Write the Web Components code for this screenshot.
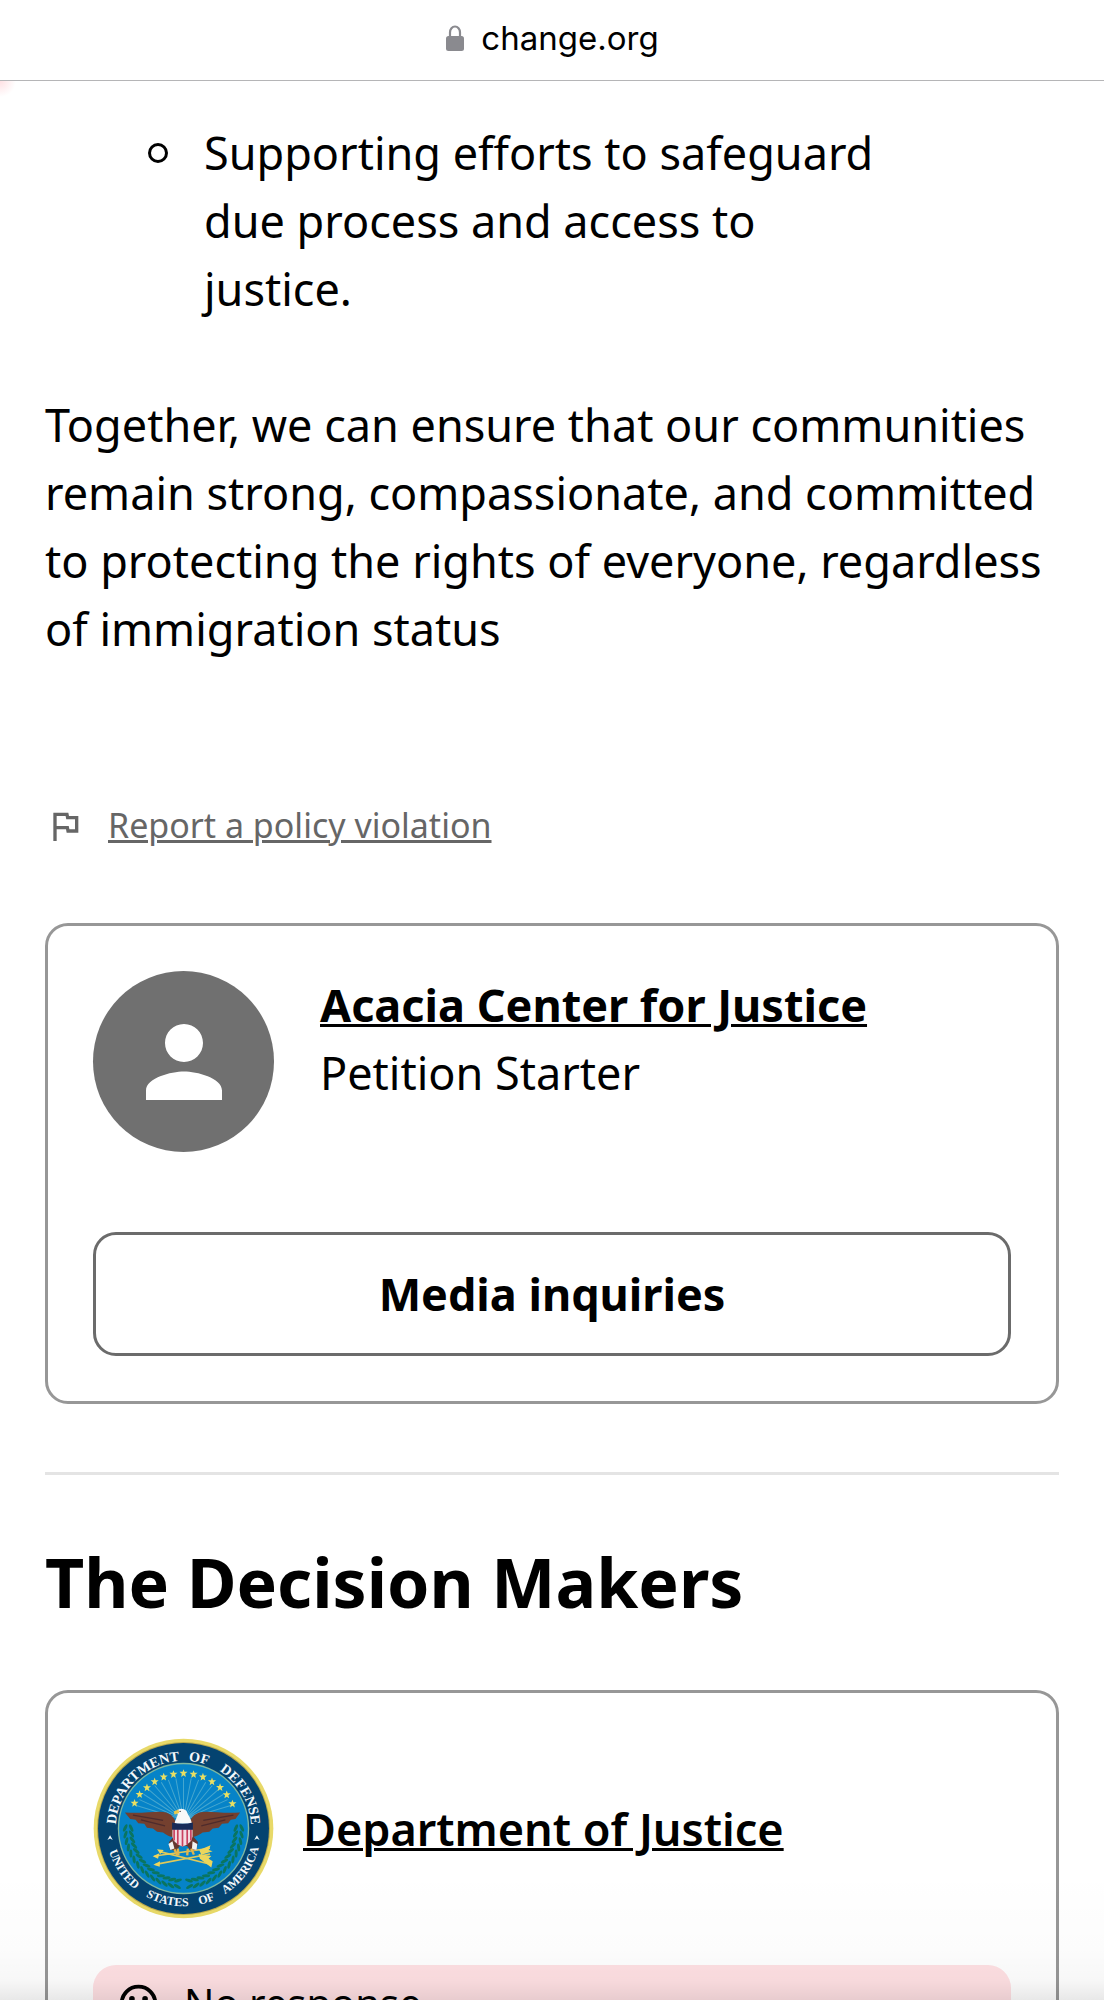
<!DOCTYPE html>
<html lang="en">
<head>
<meta charset="utf-8">
<meta name="viewport" content="width=device-width, initial-scale=1">
<title>change.org</title>
<style>
    body {
        margin: 0;
        background: #fff;
        color: #000;
        font-family: "Noto Sans", "Open Sans", sans-serif;
        font-size: 45px;
        line-height: 68px;
    }
</style>
</head>
<body>
<browser-view data-host="change.org">
    <petition-body>
        <span slot="item">Supporting efforts to safeguard due process and access to justice.</span>
        Together, we can ensure that our communities remain strong, compassionate, and committed to protecting the rights of everyone, regardless of immigration status
    </petition-body>
    <report-link>Report a policy violation</report-link>
    <outline-card>
        <profile-row data-name="Acacia Center for Justice" data-role="Petition Starter">
            <person-avatar></person-avatar>
        </profile-row>
        <outline-button>Media inquiries</outline-button>
    </outline-card>
    <section-title>The Decision Makers</section-title>
    <outline-card>
        <profile-row class="compact" data-name="Department of Justice">
            <department-seal></department-seal>
        </profile-row>
        <response-status>No response</response-status>
    </outline-card>
</browser-view>

<script>
// Shared base: puts the element's markup in an open shadow root
class BaseElement extends HTMLElement {
    constructor() {
        super();
        this.attachShadow({ mode: 'open' });
    }

    connectedCallback() {
        this.shadowRoot.innerHTML = this.template();
    }
}

class BrowserView extends BaseElement {
    template() {
        return `
            <style>
                :host {
                    display: flex;
                    flex-direction: column;
                    height: 100vh;
                    overflow: hidden;
                    position: relative;
                }
                header {
                    flex: none;
                    display: flex;
                    align-items: center;
                    justify-content: center;
                    gap: 16px;
                    height: 81px;
                    box-sizing: border-box;
                    padding-bottom: 4px;
                    border-bottom: 1px solid #b5b5b7;
                    font-family: Inter, sans-serif;
                    font-size: 33px;
                    line-height: 40px;
                }
                header svg { display: block; width: 20px; height: 28px; }
                main {
                    flex: 1;
                    min-height: 0;
                    overflow: hidden;
                    padding: 38px 45px 0;
                    background: radial-gradient(circle at 0 0, #ffe0e3 0, #fff 16px);
                }
                .shade {
                    position: absolute;
                    left: 0;
                    right: 0;
                    bottom: 0;
                    height: 130px;
                    pointer-events: none;
                    background: linear-gradient(rgba(0,0,0,0), rgba(0,0,0,.01) 60%, rgba(0,0,0,.03) 85%, rgba(0,0,0,.09));
                }
            </style>
            <header>
                <svg viewBox="0 0 20 28" aria-hidden="true">
                    <path d="M5 13V8.500a5 6 0 0 1 10 0V13" fill="none" stroke="#8a8a8f" stroke-width="2.200"/>
                    <rect x="1" y="12" width="18" height="15" rx="2.500" fill="#8a8a8f"/>
                </svg>
                <span>${this.dataset.host}</span>
            </header>
            <main><slot></slot></main>
            <div class="shade"></div>
        `;
    }
}

class PetitionBody extends BaseElement {
    template() {
        return `
            <style>
                :host { display: block; }
                ul {
                    list-style: none;
                    margin: 0 159px 68px 103px;
                    padding: 0;
                }
                li { display: flex; gap: 36px; }
                svg { flex: none; width: 20px; height: 68px; }
                p { margin: 0; }
            </style>
            <ul>
                <li>
                    <svg viewBox="0 0 20 68" aria-hidden="true"><circle cx="10" cy="34" r="8.500" fill="none" stroke="#000" stroke-width="3"/></svg>
                    <slot name="item"></slot>
                </li>
            </ul>
            <p><slot></slot></p>
        `;
    }
}

class ReportLink extends BaseElement {
    template() {
        return `
            <style>
                :host {
                    display: flex;
                    align-items: center;
                    gap: 23px;
                    margin: 137px 0 72px;
                    color: #666;
                    font-size: 34px;
                    line-height: 51px;
                }
                svg { width: 40px; height: 40px; fill: currentColor; }
                a { color: inherit; text-decoration-thickness: 3px; }
            </style>
            <svg viewBox="0 0 24 24" aria-hidden="true"><path d="M12.360 6l.4 2H18v6h-3.360l-.4-2H7V6h5.360M14 4H5v17h2v-7h5.600l.4 2h7V6h-5.600L14 4z"/></svg>
            <a href="#report"><slot></slot></a>
        `;
    }
}

class OutlineCard extends BaseElement {
    template() {
        return `
            <style>
                :host {
                    display: block;
                    padding: 45px;
                    border: 3px solid #979797;
                    border-radius: 23px;
                }
            </style>
            <slot></slot>
        `;
    }
}

class ProfileRow extends BaseElement {
    template() {
        const { name, role } = this.dataset;
        return `
            <style>
                :host { display: flex; gap: 46px; }
                :host(.compact) { align-items: center; gap: 29px; }
                a {
                    color: inherit;
                    font-weight: 700;
                    text-decoration-thickness: 3px;
                }
                :host(.compact) a { font-weight: 600; }
            </style>
            <slot></slot>
            <div>
                <a href="#profile">${name}</a>
                ${role ? `<div>${role}</div>` : ''}
            </div>
        `;
    }
}

class PersonAvatar extends BaseElement {
    template() {
        return `
            <style>
                :host {
                    flex: none;
                    display: grid;
                    place-items: center;
                    width: 181px;
                    height: 181px;
                    border-radius: 50%;
                    background: #707070;
                }
                svg { width: 114px; height: 114px; fill: #fff; }
            </style>
            <svg viewBox="0 0 24 24" aria-hidden="true"><path d="M12 12c2.210 0 4-1.790 4-4s-1.790-4-4-4-4 1.790-4 4 1.790 4 4 4zm0 2c-2.670 0-8 1.340-8 4v2h16v-2c0-2.660-5.330-4-8-4z"/></svg>
        `;
    }
}

class OutlineButton extends BaseElement {
    template() {
        return `
            <style>
                :host { display: block; margin-top: 80px; }
                button {
                    display: block;
                    width: 100%;
                    padding: 25px;
                    border: 3px solid #6b6b6b;
                    border-radius: 23px;
                    background: #fff;
                    color: #000;
                    font: inherit;
                    font-weight: 700;
                }
            </style>
            <button type="button"><slot></slot></button>
        `;
    }
}

class SectionTitle extends BaseElement {
    template() {
        return `
            <style>
                :host { display: block; margin: 68px 0 64px; }
                hr { margin: 0 0 63px; border: 0; border-top: 3px solid #e4e4e4; }
                h2 { margin: 0; font-size: 68px; line-height: 88px; font-weight: 700; }
            </style>
            <hr>
            <h2><slot></slot></h2>
        `;
    }
}

class ResponseStatus extends BaseElement {
    template() {
        return `
            <style>
                :host {
                    display: flex;
                    align-items: center;
                    gap: 23px;
                    margin-top: 46px;
                    padding: 8px 23px;
                    border-radius: 23px;
                    background: #ffe0e3;
                    font-size: 40px;
                    line-height: 60px;
                }
                svg { width: 45px; height: 45px; }
            </style>
            <svg viewBox="0 0 24 24" aria-hidden="true">
                <circle cx="12" cy="12" r="9" fill="none" stroke="#000" stroke-width="2"/>
                <circle cx="8.500" cy="9.500" r="1.500"/>
                <circle cx="15.500" cy="9.500" r="1.500"/>
                <path d="M7.500 17a5 5 0 0 1 9 0" fill="none" stroke="#000" stroke-width="1.600"/>
            </svg>
            <span><slot></slot></span>
        `;
    }
}

class DepartmentSeal extends BaseElement {
    template() {
        const stars = [[165,250],[180,224],[202,204],[225,186],[252,172],[281,164],[311,161],[341,164],[369,172],[396,186],[420,203],[440,225],[457,252]];
        const star = 'M0-12L3-4 12-4 5 2 7 11 0 6-7 11-5 2-12-4-3-4Z';

        // laurel leaves, mirrored on both sides of the seal
        let leaves = '';
        for (let i = 0; i < 14; i++) {
            const deg = 96 + i * 6.5;
            const a = deg * Math.PI / 180;
            for (const r of [156, 174]) {
                const x = Math.cos(a) * r;
                const y = Math.sin(a) * r;
                const tilt = deg + (r === 156 ? 65 : 115);
                leaves += `<ellipse cx="${x}" cy="${y}" rx="12" ry="4.500" transform="rotate(${tilt} ${x} ${y})"/>`;
            }
        }

        let rays = '';
        for (let i = 0; i < 17; i++) {
            const a = (200 + i * 8.750) * Math.PI / 180;
            rays += `M311 300L${311 + Math.cos(a) * 150} ${300 + Math.sin(a) * 125}`;
        }

        return `
            <style>
                :host { flex: none; display: block; width: 181px; height: 181px; }
                svg { display: block; width: 100%; height: 100%; }
                text {
                    fill: #f4f8fb;
                    font-family: "Liberation Serif", serif;
                    font-weight: 700;
                    text-anchor: middle;
                }
            </style>
            <svg viewBox="41 56 540 540" role="img" aria-label="Department seal">
                <circle cx="311" cy="326" r="268" fill="#e8d968"/>
                <circle cx="311" cy="326" r="258" fill="#b9a84b"/>
                <circle cx="311" cy="326" r="255" fill="#044370"/>
                <circle cx="311" cy="326" r="196" fill="#7fb8a0"/>
                <circle cx="311" cy="326" r="192" fill="#0683c8"/>
                <path d="${rays}" stroke="#45a6cf" stroke-width="3" fill="none"/>
                <g transform="translate(311 326)" fill="#0a7560">
                    ${leaves}
                    <g transform="scale(-1 1)">${leaves}</g>
                </g>
                <g fill="#e9df62">
                    ${stars.map(([x, y]) => `<path d="${star}" transform="translate(${x} ${y})"/>`).join('')}
                </g>
                <g fill="none" stroke="#dfc95a" stroke-width="5">
                    <path d="M225 408L390 385M228 433L390 402M240 395L388 432"/>
                </g>
                <path d="M219 409l20-9-4 16zM221 434l20-10-1 16zM232 388l20 2-10 12zM358 390l34-14-6 14 12 4-34 10zM356 402l38 6-8 8 12 8-4 18-34-26z" fill="#ecd65c"/>
                <path d="M136 278C180 282 210 276 240 276C270 276 284 290 290 314L286 352C268 352 258 344 250 338L232 336L220 326L202 324L194 312L176 310L168 300L152 298Z" fill="#74402f"/>
                <path d="M480 278C436 282 410 276 378 276C348 276 334 290 326 314L330 352C348 352 360 344 368 338L388 336L398 326L416 324L426 312L444 310L452 300L466 298Z" fill="#74402f"/>
                <path d="M160 286L250 302M184 300L256 318M370 302L460 286M364 318L436 300" stroke="#4e2b2c" stroke-width="4"/>
                <path d="M268 366L290 340H332L354 366L350 390L332 392L322 378H300L288 394L270 388Z" fill="#65382e"/>
                <path d="M266 372l12-8 6 22-12 4zM338 364l14 8-2 18-14-2z" fill="#f2f2f0"/>
                <path d="M290 276C294 266 310 264 320 274C324 286 334 296 336 312H284C286 300 292 292 294 284Z" fill="#f7f8f8"/>
                <path d="M296 269L282 275L284 284L298 280Z" fill="#e9c94d"/>
                <circle cx="301" cy="275" r="2" fill="#333"/>
                <path d="M278 328H338V350Q336 370 308 380Q280 370 278 350Z" fill="#f3dce2"/>
                <path d="M283 328V362M294 328V374M308 328V380M322 328V374M333 328V362" stroke="#c9405f" stroke-width="5"/>
                <path d="M277 308Q308 316 339 308V330H277Z" fill="#172b58"/>
                <path d="M284 388l8 18M294 386l2 20M324 386l-2 20M334 386l8 18" stroke="#e1b64c" stroke-width="7"/>
                <path d="M84 360l8-14 8 14-8-4zM522 360l8-14 8 14-8-4z" fill="#f4f8fb"/>
                <path id="top" d="M109 326a202 202 0 0 1 404 0" fill="none"/>
                <path id="bottom" d="M79 326a232 232 0 0 0 464 0" fill="none"/>
                <g font-size="42">
                    <text><textPath href="#top" startOffset="25%">DEPARTMENT</textPath></text>
                    <text><textPath href="#top" startOffset="57%">OF</textPath></text>
                    <text><textPath href="#top" startOffset="83%">DEFENSE</textPath></text>
                </g>
                <g font-size="36">
                    <text><textPath href="#bottom" startOffset="19%">UNITED</textPath></text>
                    <text><textPath href="#bottom" startOffset="43%">STATES</textPath></text>
                    <text><textPath href="#bottom" startOffset="60%">OF</textPath></text>
                    <text><textPath href="#bottom" startOffset="80%">AMERICA</textPath></text>
                </g>
            </svg>
        `;
    }
}

customElements.define('browser-view', BrowserView);
customElements.define('petition-body', PetitionBody);
customElements.define('report-link', ReportLink);
customElements.define('outline-card', OutlineCard);
customElements.define('profile-row', ProfileRow);
customElements.define('person-avatar', PersonAvatar);
customElements.define('outline-button', OutlineButton);
customElements.define('section-title', SectionTitle);
customElements.define('response-status', ResponseStatus);
customElements.define('department-seal', DepartmentSeal);
</script>
</body>
</html>
